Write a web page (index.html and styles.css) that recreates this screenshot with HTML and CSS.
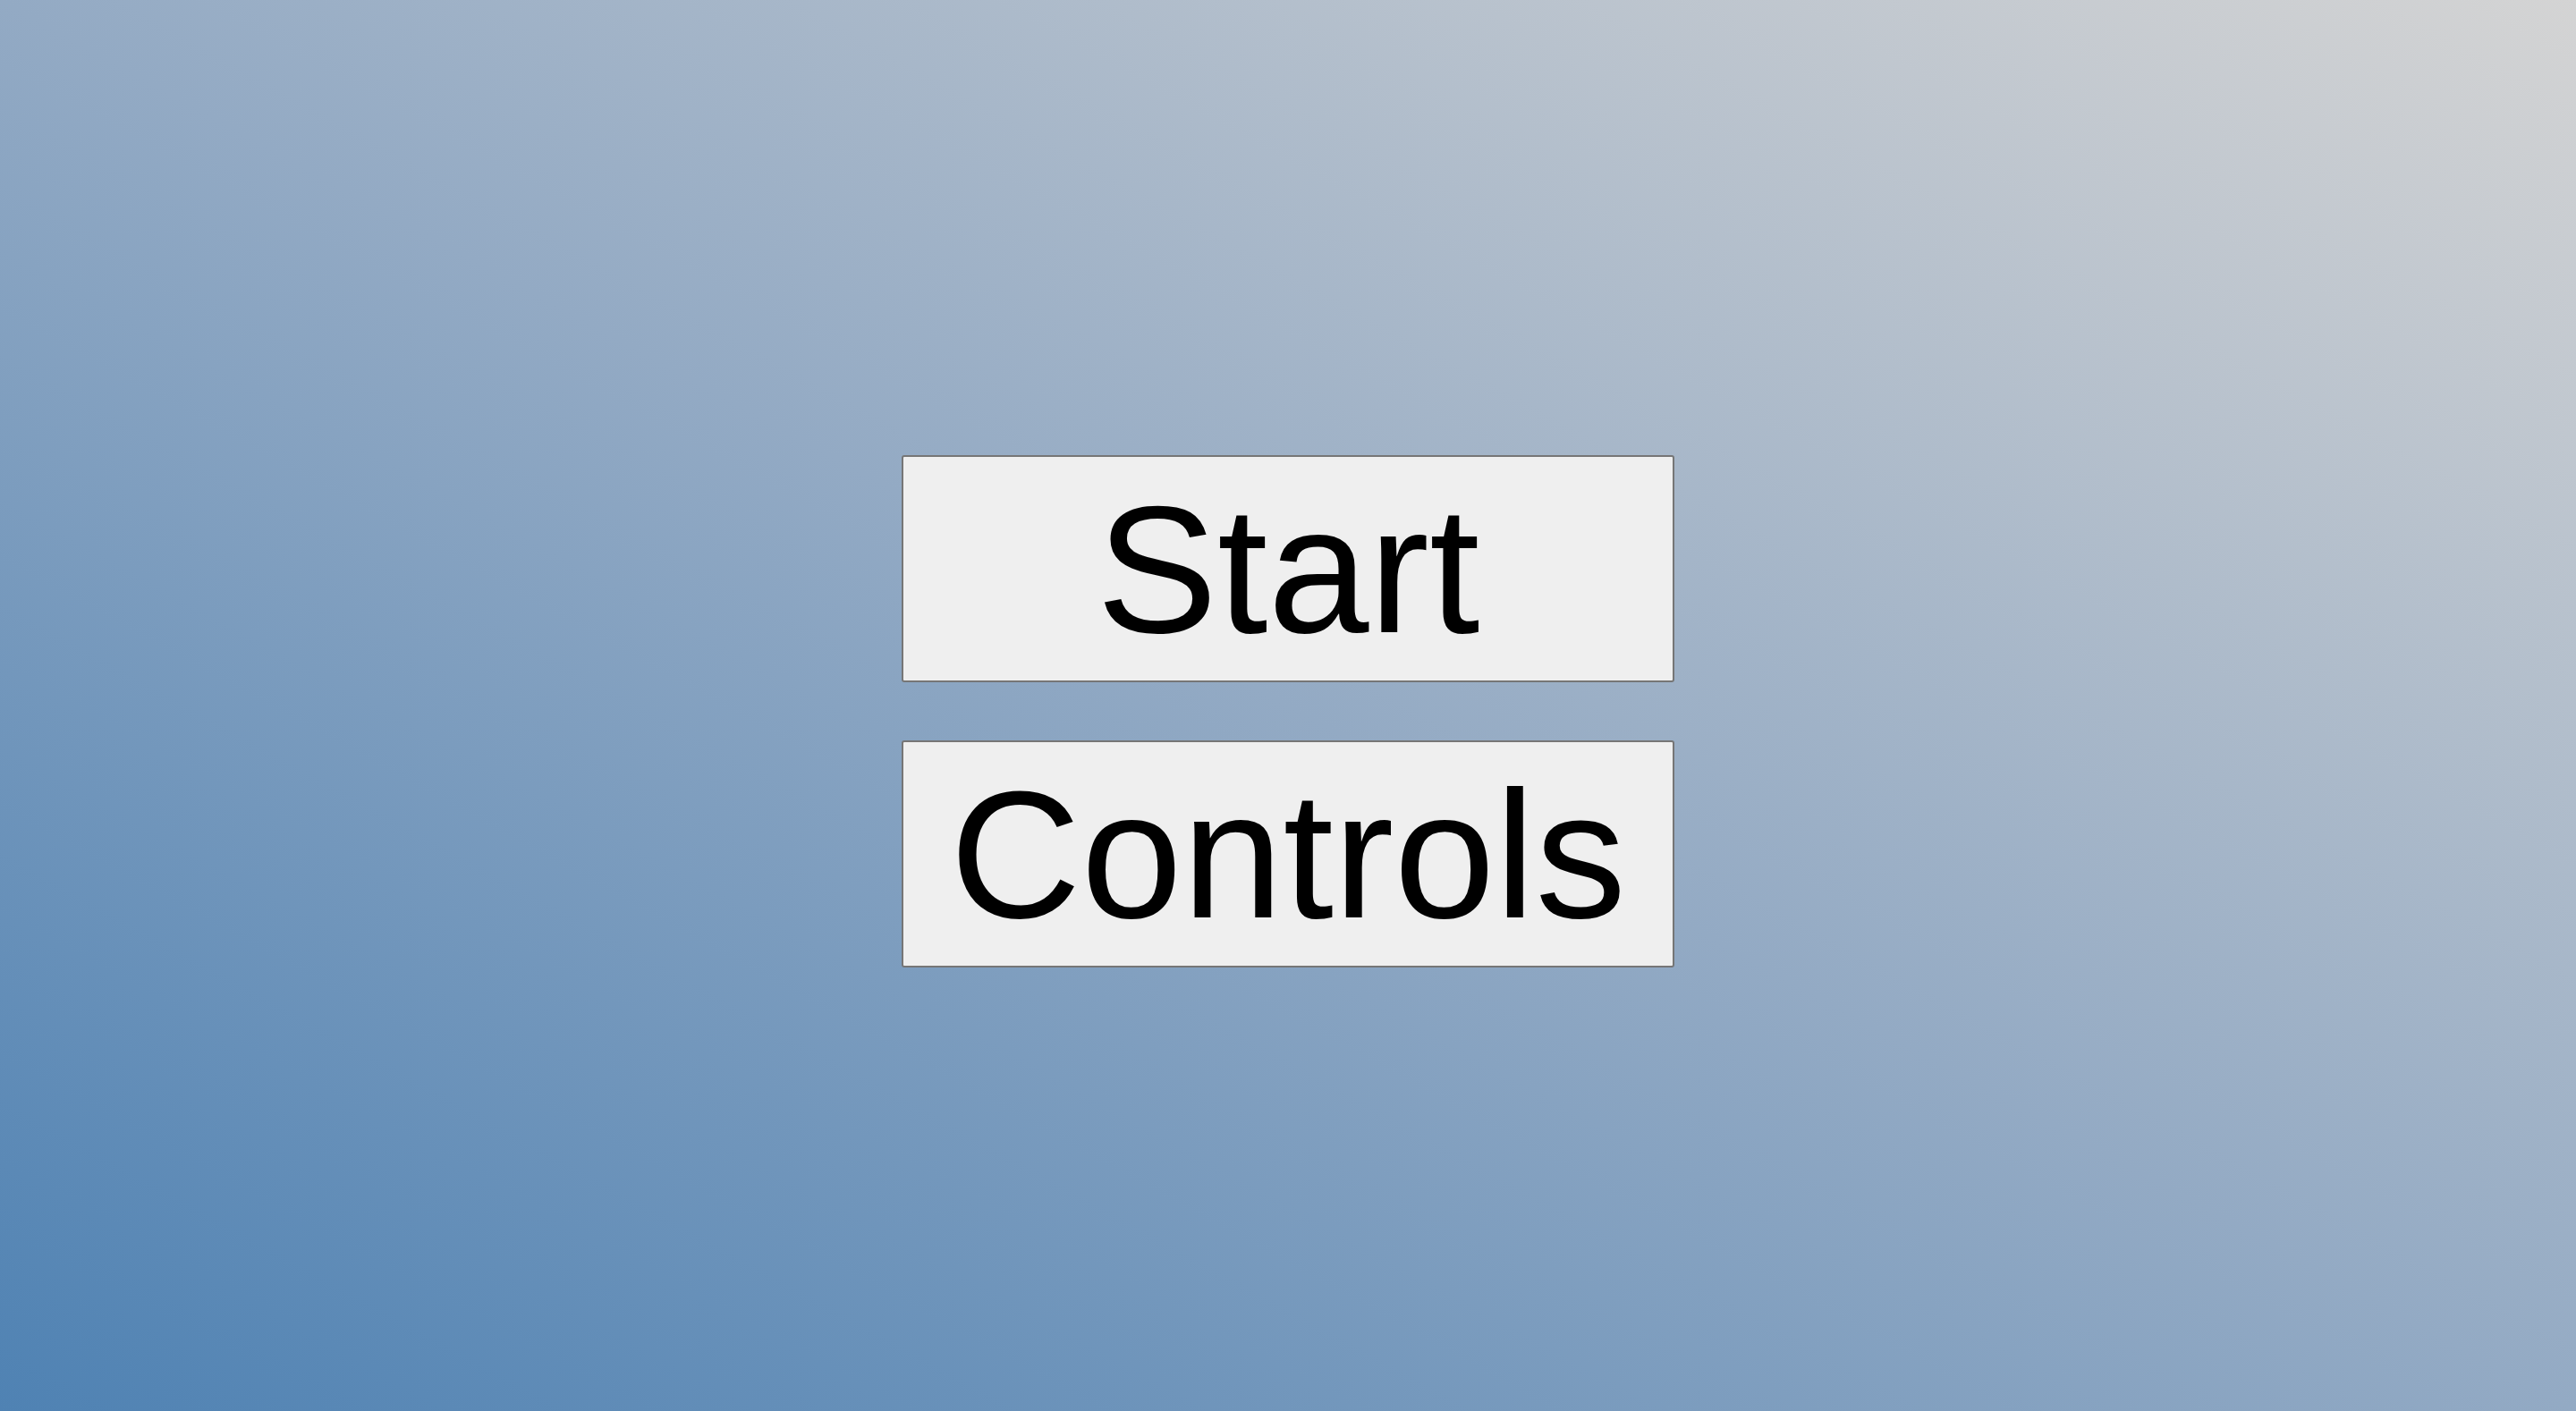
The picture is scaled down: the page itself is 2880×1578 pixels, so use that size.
FILE: index.html
```html
<!DOCTYPE html>
<html lang="en">
<head>
<meta charset="utf-8">
<title>Menu</title>
<link rel="stylesheet" href="styles.css">
</head>
<body>
<main class="menu">
  <button class="menu-btn" type="button">Start</button>
  <button class="menu-btn" type="button">Controls</button>
</main>
</body>
</html>
```
FILE: styles.css
```css
html, body {
  margin: 0;
  padding: 0;
  height: 100%;
}
body {
  background: linear-gradient(to top right, #4f82b3 0%, #93aac4 50%, #d4d4d4 100%);
  overflow: hidden;
}
.menu {
  display: flex;
  flex-direction: column;
  align-items: center;
  gap: 65px;
  padding-top: 509px;
}
.menu-btn {
  box-sizing: border-box;
  width: 864px;
  height: 254px;
  margin: 0;
  padding: 0;
  background: #efefef;
  border: 2px solid #767676;
  border-radius: 3px;
  color: #000;
  font-family: "Liberation Sans", Arial, sans-serif;
  font-size: 203px;
  line-height: 1;
  display: flex;
  align-items: center;
  justify-content: center;
  cursor: pointer;
}
```
